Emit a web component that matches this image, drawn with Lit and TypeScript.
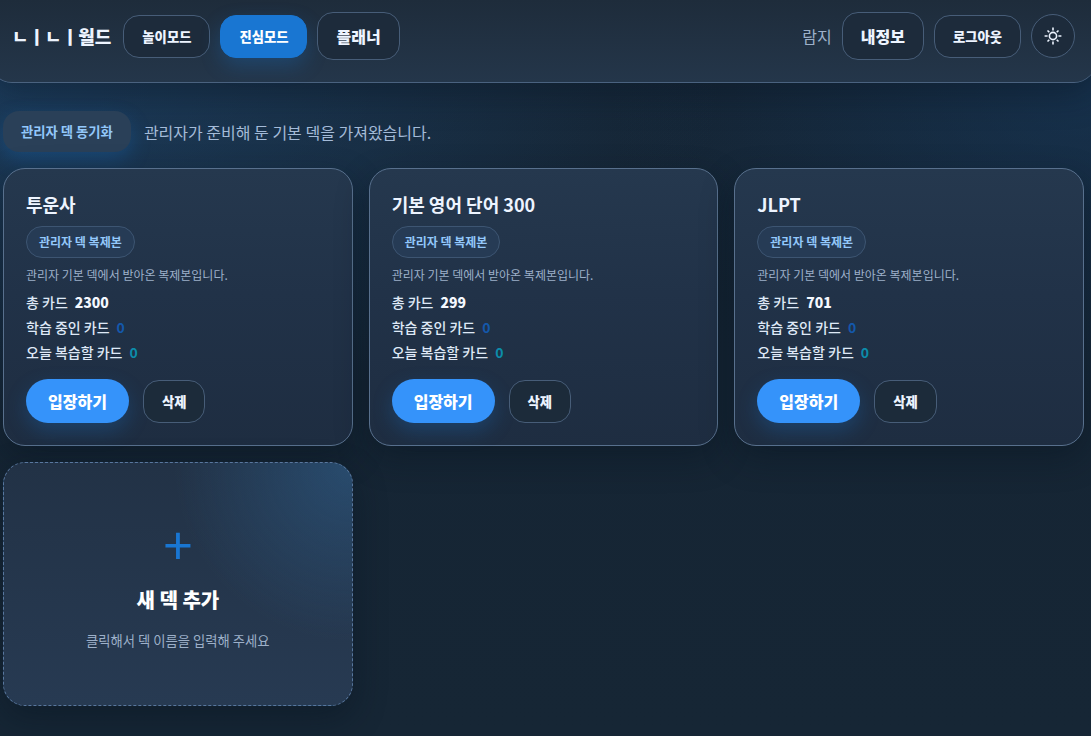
import { LitElement, html, css } from "lit";
import { customElement, property } from "lit/decorators.js";

interface Deck {
  name: string;
  total: number;
  learning: number;
  due: number;
}

const decks: Deck[] = [
  { name: "투운사", total: 2300, learning: 0, due: 0 },
  { name: "기본 영어 단어 300", total: 299, learning: 0, due: 0 },
  { name: "JLPT", total: 701, learning: 0, due: 0 },
];

const shared = css`
  * {
    box-sizing: border-box;
  }
  button,
  .button {
    font-family: inherit;
    font-weight: 800;
    line-height: 19px;
    color: #edf4ff;
    background: #1d2b3b;
    border: 1px solid #475d78;
    border-radius: 16px;
    padding: 11px 18px;
    white-space: nowrap;
    text-decoration: none;
    cursor: pointer;
  }
`;

@customElement("deck-card")
export class DeckCard extends LitElement {
  @property({ attribute: false }) deck!: Deck;

  static styles = [
    shared,
    css`
      :host {
        display: block;
      }
      .card {
        height: 100%;
        padding: 22px;
        border: 1px solid #58708d;
        border-radius: 22px;
        background: linear-gradient(180deg, #25384e 0%, #213248 45%, #1e2d41 100%);
        box-shadow: 0 12px 32px rgba(8, 18, 32, 0.42);
      }
      .name {
        margin: 0 0 8px;
        font-size: 18px;
        line-height: 27px;
        font-weight: 700;
        color: #edf4ff;
      }
      .badge {
        display: inline-flex;
        padding: 6px 12px;
        border: 1px solid #3d5572;
        border-radius: 16px;
        background: #263b55;
        color: #93c8fb;
        font-size: 12px;
        line-height: 18px;
        font-weight: 700;
        vertical-align: top;
      }
      .note {
        margin: 8px 0;
        font-size: 12px;
        line-height: 18px;
        color: #9db0c9;
      }
      .stats {
        display: grid;
        gap: 4px;
        margin: 0;
        font-size: 14px;
        line-height: 21px;
        font-weight: 500;
        color: #dfe9f7;
      }
      .stat {
        display: flex;
        gap: 7px;
      }
      .stat dd {
        margin: 0;
      }
      .stat .total {
        font-weight: 800;
        color: #f4f8ff;
      }
      .stat .learning {
        font-weight: 700;
        color: #1458ab;
      }
      .stat .due {
        font-weight: 700;
        color: #0c8caa;
      }
      .actions {
        display: flex;
        align-items: center;
        gap: 14px;
        margin-top: 16px;
      }
      .enter {
        padding: 10px 22px;
        border: 0;
        border-radius: 22px;
        background: #3593fa;
        color: #fff;
        font-size: 16px;
        line-height: 24px;
        box-shadow: 0 8px 20px rgba(25, 118, 210, 0.28);
      }
      .remove {
        background: #1c2b3a;
      }
    `,
  ];

  render() {
    const d = this.deck;
    return html`
      <article class="card">
        <h2 class="name">${d.name}</h2>
        <span class="badge">관리자 덱 복제본</span>
        <p class="note">관리자 기본 덱에서 받아온 복제본입니다.</p>
        <dl class="stats">
          <div class="stat"><dt>총 카드</dt><dd class="total">${d.total}</dd></div>
          <div class="stat"><dt>학습 중인 카드</dt><dd class="learning">${d.learning}</dd></div>
          <div class="stat"><dt>오늘 복습할 카드</dt><dd class="due">${d.due}</dd></div>
        </dl>
        <div class="actions">
          <button class="enter" type="button">입장하기</button>
          <button class="remove" type="button">삭제</button>
        </div>
      </article>
    `;
  }
}

@customElement("app-root")
export class AppRoot extends LitElement {
  static styles = [
    shared,
    css`
      :host {
        display: block;
        min-height: 100vh;
        overflow: hidden;
        font-family: "Noto Sans CJK KR", "Noto Sans", sans-serif;
        font-size: 16px;
        line-height: 24px;
        color: #edf4ff;
        background:
          radial-gradient(ellipse 720px 340px at 0 90px, rgba(38, 94, 150, 0.4), transparent),
          radial-gradient(ellipse 480px 320px at 100% 90px, rgba(24, 70, 118, 0.36), transparent),
          linear-gradient(180deg, #152433 0%, #162635 100%);
      }
      .topbar {
        display: flex;
        align-items: center;
        justify-content: space-between;
        margin: 0 -5px 0 -10px;
        padding: 12px 21px 22px 22px;
        border-bottom: 1px solid #4a627f;
        border-radius: 0 0 22px 22px;
        background: linear-gradient(180deg, #1e2c3b, #24364a);
        box-shadow: 0 12px 32px rgba(8, 18, 32, 0.38);
      }
      .group {
        display: flex;
        align-items: center;
        gap: 10px;
      }
      .logo {
        margin-right: 2px;
        font-size: 18px;
        line-height: 27px;
        font-weight: 800;
        white-space: nowrap;
      }
      .button {
        display: block;
        line-height: 24px;
      }
      button.active {
        background: #1976d2;
        border-color: #1976d2;
        color: #fff;
        box-shadow: 0 8px 20px rgba(25, 118, 210, 0.28);
      }
      .user {
        color: #9db0c9;
      }
      .theme {
        display: grid;
        place-items: center;
        width: 44px;
        height: 44px;
        padding: 0;
        border-radius: 50%;
      }
      .theme svg {
        width: 18px;
        height: 18px;
        fill: none;
        stroke: currentColor;
        stroke-width: 1.6;
      }
      .content {
        padding: 28px 7px 28px 3px;
      }
      .sync-row {
        display: flex;
        align-items: center;
        gap: 13px;
        margin-bottom: 16px;
      }
      .sync {
        border: 0;
        background: #2a4058;
        color: #93c8fb;
        font-weight: 700;
        box-shadow: 0 8px 20px rgba(25, 118, 210, 0.28);
      }
      .message {
        color: #a4bbd8;
      }
      .grid {
        display: grid;
        grid-template-columns: repeat(3, minmax(0, 1fr));
        gap: 16px;
      }
      .add {
        display: flex;
        flex-direction: column;
        align-items: center;
        justify-content: center;
        min-height: 244px;
        border: 1px dashed #58779e;
        border-radius: 22px;
        background:
          radial-gradient(circle at 100% 0, rgba(52, 120, 180, 0.36), transparent 42%),
          linear-gradient(180deg, #223246, #273a52);
        box-shadow: 0 12px 32px rgba(8, 18, 32, 0.42);
        font-weight: 400;
      }
      .plus {
        font-size: 52px;
        line-height: 48px;
        color: #1976d2;
      }
      .add-title {
        margin: 18px 0 16px;
        font-size: 20px;
        line-height: 30px;
        font-weight: 800;
        color: #fff;
      }
      .add-note {
        color: #9db0c9;
      }
    `,
  ];

  render() {
    return html`
      <header class="topbar">
        <nav class="group">
          <span class="logo">ㄴㅣㄴㅣ월드</span>
          <button type="button">놀이모드</button>
          <button class="active" type="button">진심모드</button>
          <a class="button" href="#planner">플래너</a>
        </nav>
        <div class="group">
          <span class="user">람지</span>
          <a class="button" href="#me">내정보</a>
          <button type="button">로그아웃</button>
          <button class="theme" type="button" aria-label="테마 변경">
            <svg viewBox="0 0 18 18" aria-hidden="true">
              <circle cx="9" cy="9" r="3.6" />
              <path
                d="M9 .6v3M9 14.400v3M.6 9h3M14.400 9h3M3.500 3.500l1.800 1.800M12.700 12.700l1.800 1.800M14.500 3.500l-1.800 1.800M5.300 12.700l-1.800 1.800"
              />
            </svg>
          </button>
        </div>
      </header>
      <main class="content">
        <div class="sync-row">
          <button class="sync" type="button">관리자 덱 동기화</button>
          <span class="message" role="status">관리자가 준비해 둔 기본 덱을 가져왔습니다.</span>
        </div>
        <section class="grid">
          ${decks.map((d) => html`<deck-card .deck=${d}></deck-card>`)}
          <button class="add" type="button">
            <span class="plus" aria-hidden="true">+</span>
            <span class="add-title">새 덱 추가</span>
            <span class="add-note">클릭해서 덱 이름을 입력해 주세요</span>
          </button>
        </section>
      </main>
    `;
  }
}
